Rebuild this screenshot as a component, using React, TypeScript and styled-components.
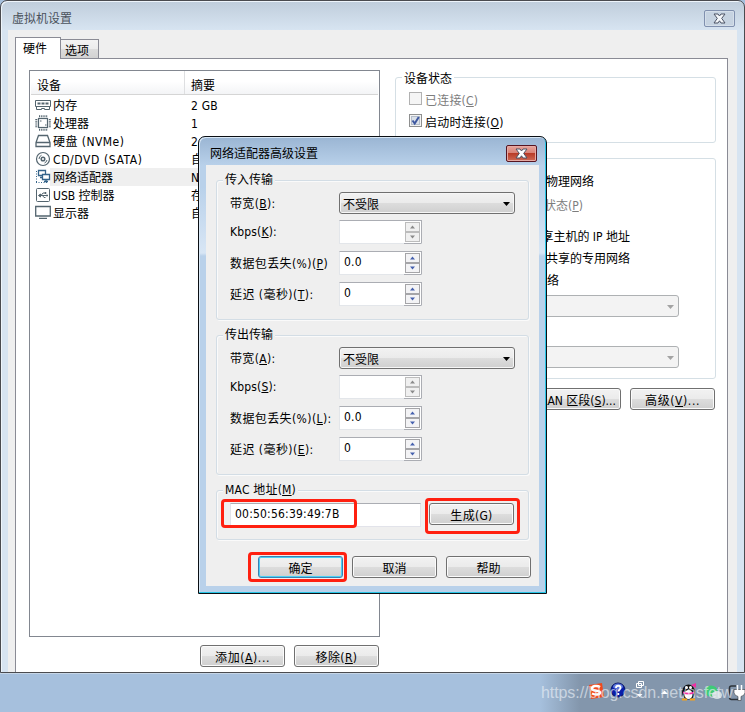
import React from "react";
import styled, { createGlobalStyle, css } from "styled-components";

const Global = createGlobalStyle`
  * { box-sizing: border-box; }
  body { margin: 0; overflow: hidden; background: #a6c0dd; }
`;

const Desktop = styled.div`
  position: relative;
  width: 745px;
  height: 712px;
  overflow: hidden;
  display: flex;
  flex-direction: column;
  background: #a6c0dd;
  color: #000;
  font: 12px/18px "DejaVu Sans Condensed", "Noto Sans CJK SC", sans-serif;
  white-space: nowrap;
`;

const Window = styled.div`
  width: 745px;
  height: 673px;
  display: flex;
  flex-direction: column;
  border: 1px solid #4a4b4f;
  border-radius: 7px 7px 0 0;
  box-shadow: inset 1px 1px 0 #eef5fb;
  background: linear-gradient(#bfcddb 0, #d7e4f1 29px, #d7e4f1 100%);
`;

const TitleBar = styled.div`
  height: 29px;
  flex: none;
  display: flex;
  justify-content: space-between;
  padding: 9px 9px 0 11px;
  color: #4a525c;
`;

const CloseButton = styled.div<{ $red?: boolean }>`
  width: 31px;
  height: 17px;
  display: flex;
  align-items: center;
  justify-content: center;
  border-radius: 2px;
  border: 1px solid ${(p) => (p.$red ? "#571521" : "#8090ae")};
  box-shadow: inset 0 0 0 1px ${(p) => (p.$red ? "#e6aaa4" : "#d5dfea")};
  background: ${(p) =>
    p.$red ? "linear-gradient(#e7a49c 0, #d88175 48%, #b93c28 50%, #ce6a55 100%)" : "#c6d3e1"};
`;

const Client = styled.div`
  flex: 1;
  min-height: 0;
  display: flex;
  flex-direction: column;
  margin: 0 7px;
  padding: 7px 9px 0 7px;
  background: #efefef;
`;

const Tabs = styled.div`
  height: 21px;
  flex: none;
  display: flex;
  align-items: flex-end;
`;

const Tab = styled.div<{ $active?: boolean }>`
  border: 1px solid #8a8b95;
  border-bottom: 0;
  ${(p) =>
    p.$active
      ? css`
          width: 46px;
          height: 22px;
          margin-bottom: -1px;
          padding: 2px 0 0 7px;
          background: #fff;
          z-index: 1;
        `
      : css`
          width: 38px;
          height: 19px;
          padding: 2px 0 0 4px;
          border-left: 0;
          background: linear-gradient(#f3f3f3, #ececec 50%, #dcdcdc 52%, #d2d2d2);
        `}
`;

const Page = styled.div`
  flex: 1;
  min-height: 0;
  display: flex;
  gap: 15px;
  padding: 11px 11px 0 13px;
  border: 1px solid #8a8b95;
  border-bottom: 0;
  background: #fff;
`;

const Left = styled.div`
  width: 351px;
  display: flex;
  flex-direction: column;
`;

const List = styled.div`
  height: 567px;
  flex: none;
  border: 1px solid #828790;
  background: #fff;
`;

const ListHeader = styled.div`
  display: flex;
  height: 24px;
  margin: 0 1px 1px;
  border-bottom: 1px solid #d5d5d5;
  background: linear-gradient(#fff 45%, #f3f4f6);
`;

const HeaderCell = styled.div<{ $w?: number }>`
  width: ${(p) => (p.$w ? p.$w + "px" : "auto")};
  padding: 6px 0 0 6px;
  ${(p) => p.$w && "border-right: 1px solid #dedfe1;"}
`;

const ListRow = styled.div<{ $selected?: boolean }>`
  display: flex;
  height: 18px;
  padding: 1px 0 0 5px;
  background: ${(p) => (p.$selected ? "linear-gradient(90deg, #fff 20px, #efefef 20px)" : "transparent")};
`;

const DeviceIcon = styled.svg`
  width: 17px;
  height: 17px;
  margin-right: 1px;
  flex: none;
  fill: none;
  stroke: #54656f;
`;

const DeviceName = styled.div<{ $ls: number }>`
  width: 138px;
  letter-spacing: ${(p) => p.$ls}px;
`;

const Text = styled.span<{ $ls?: number; $dim?: boolean }>`
  letter-spacing: ${(p) => p.$ls ?? 0}px;
  color: ${(p) => (p.$dim ? "#7d7d7d" : "inherit")};
`;

const Key = styled.span`
  text-decoration: underline;
  text-underline-offset: 1px;
  text-decoration-thickness: 1px;
`;

const Actions = styled.div<{ $top: number; $shift: number }>`
  display: flex;
  justify-content: flex-end;
  gap: 9px;
  margin: ${(p) => p.$top}px ${(p) => p.$shift}px 0 0;
`;

const Button = styled.div<{ $primary?: boolean }>`
  width: 85px;
  height: 22px;
  flex: none;
  display: flex;
  justify-content: center;
  padding-top: 3px;
  border: 1px solid ${(p) => (p.$primary ? "#3c7fb1" : "#707070")};
  border-radius: 3px;
  box-shadow: inset 0 0 0 1px ${(p) => (p.$primary ? "#48d0f6" : "#fbfbfb")};
  background: linear-gradient(#f2f2f2, #ebebeb 48%, #dddddd 50%, #cfcfcf);
`;

const Right = styled.div`
  width: 321px;
  padding-top: 7px;
`;

const Group = styled.div<{ $h: number; $gap?: number; $inDialog?: boolean }>`
  height: ${(p) => p.$h}px;
  margin-bottom: ${(p) => p.$gap ?? 0}px;
  display: flex;
  flex-direction: column;
  align-items: stretch;
  border: 1px solid ${(p) => (p.$inDialog ? "#d3dde5" : "#d5dfe5")};
  border-radius: 3px;
  ${(p) => p.$inDialog && "box-shadow: inset 1px 1px 0 #fafafa, 1px 1px 0 #fafafa;"}
`;

const Legend = styled.div<{ $bg: string; $drop?: number }>`
  align-self: flex-start;
  height: 18px;
  margin: ${(p) => -10 + (p.$drop ?? 0)}px 0 0 6px;
  padding: 0 2px;
  background: ${(p) => p.$bg};
`;

const CheckRow = styled.div`
  display: flex;
  height: 22px;
  gap: 3px;
  padding: 4px 0 0 13px;
`;

const CheckBox = styled.svg`
  width: 13px;
  height: 13px;
  flex: none;
`;

const Option = styled.div<{ $w: number; $h: number }>`
  flex: none;
  height: ${(p) => p.$h}px;
  width: ${(p) => p.$w}px;
  padding-top: 1px;
  text-align: right;
`;

const Combo = styled.div<{ $w: number; $gap?: number; $off?: boolean }>`
  width: ${(p) => p.$w}px;
  height: 22px;
  flex: none;
  display: flex;
  justify-content: space-between;
  margin-bottom: ${(p) => p.$gap ?? 0}px;
  padding: 3px 4px 0 3px;
  border: 1px solid ${(p) => (p.$off ? "#aeb1b3" : "#707070")};
  border-radius: 3px;
  background: ${(p) => (p.$off ? "#f3f3f3" : "linear-gradient(#f2f2f2, #ebebeb 48%, #dddddd 50%, #cfcfcf)")};
  ${(p) => !p.$off && "box-shadow: inset 0 0 0 1px #f6f6f6;"}
`;

const Arrow = styled.svg<{ $c: string }>`
  width: 7px;
  height: 4px;
  margin-top: 6px;
  fill: ${(p) => p.$c};
`;

/* Modal dialog */
const Dialog = styled.div`
  position: absolute;
  left: 198px;
  top: 136px;
  width: 349px;
  height: 458px;
  display: flex;
  flex-direction: column;
  border: 1px solid #0b0f14;
  border-radius: 7px 7px 0 0;
  box-shadow: inset -1px -1px 0 #27c5e6, inset 1px 1px 0 #d9e8f6;
  background: linear-gradient(#9ab5d3 0, #b9d1ea 29px, #b9d1ea 50px, #d8e6f5 116px, #b9d1ea 119px);
`;

const DialogTitle = styled.div`
  height: 28px;
  flex: none;
  display: flex;
  justify-content: space-between;
  padding: 8px 9px 0 11px;
`;

const DialogBody = styled.div`
  width: 333px;
  height: 421px;
  margin-left: 7px;
  padding: 15px 10px 0;
  background: #efefef;
`;

const Field = styled.div<{ $h: number }>`
  display: grid;
  grid-template-columns: 109px auto;
  height: ${(p) => p.$h}px;
  padding: 3px 0 0 13px;
`;

const FieldLabel = styled.div<{ $top: number; $ls: number }>`
  padding-top: ${(p) => p.$top}px;
  letter-spacing: ${(p) => p.$ls}px;
`;

const Spinner = styled.div`
  width: 83px;
  height: 24px;
  display: flex;
  justify-content: space-between;
  padding: 1px 0 1px 4px;
  border: 1px solid #e3e6ea;
  border-top-color: #abadb3;
  border-right-color: #abadb3;
  background: #fff;
`;

const SpinButtons = styled.svg`
  width: 17px;
  height: 23px;
  margin: -1px 0 -2px;
`;

const MacRow = styled.div`
  display: flex;
  justify-content: space-between;
  margin: 4px 14px 0 13px;
`;

const MacInput = styled.div`
  width: 191px;
  height: 24px;
  padding: 1px 4px;
  border: 1px solid #e2e3ea;
  border-top-color: #abadb3;
  background: #fff;
`;

const Highlight = styled.div<{ $x: number; $y: number; $w: number; $h: number }>`
  position: absolute;
  left: ${(p) => p.$x}px;
  top: ${(p) => p.$y}px;
  width: ${(p) => p.$w}px;
  height: ${(p) => p.$h}px;
  border: 3px solid #ff2010;
  border-radius: 4px;
`;

const Taskbar = styled.div`
  height: 39px;
  display: flex;
  justify-content: flex-end;
  border-top: 1px solid #c6d6e7;
  background: linear-gradient(90deg, #a6c0dd 540px, #8396ac 580px);
`;

const Tray = styled.svg`
  width: 165px;
  height: 38px;
`;

const Watermark = styled.div`
  position: absolute;
  left: 541px;
  top: 683px;
  font: 16px/20px "Liberation Sans", sans-serif;
  letter-spacing: -0.08px;
  color: rgba(235, 240, 246, 0.65);
`;

const Cross = ({ dim }: { dim?: boolean }) => (
  <svg width="13" height="11" viewBox="0 0 13 11">
    <path d="M1 1h4l1.500 2L8 1h4L8.700 5.400 12 10H8L6.500 7.800 5 10H1l3.300-4.600z" fill={dim ? "#f4f7fa" : "#fff"} stroke="#4b5264" strokeWidth="1" />
  </svg>
);

const icons: Record<string, React.ReactNode> = {
  memory: (
    <>
      <path d="M.5 3.500h15v6H.5zM1.500 10v2.500h5v-1h3v1h5V10" />
      <path strokeWidth="2" d="M2.500 6.500h3M6.500 6.500h3M10.500 6.500h3" />
    </>
  ),
  cpu: (
    <>
      <rect x="3.500" y="3.500" width="9" height="9" strokeWidth="1.200" />
      <path strokeWidth="2" strokeDasharray="1.200 1" d="M4 1.300h9M4 14.800h9M1.300 4v9M14.800 4v9" />
      <path d="M5 6h1.500M10 10h1.500" />
    </>
  ),
  disk: (
    <path strokeWidth="1.300" d="M3.500 2.500h9l2.500 7v4H1v-4zM1 9.500h14" />
  ),
  cd: (
    <>
      <circle cx="8" cy="8" r="6.500" strokeWidth="1.200" />
      <circle cx="8" cy="8" r="1.800" strokeWidth="1.500" />
      <path d="M4 8A4 4 0 0 1 6.500 4.300M9.500 12a4 4 0 0 0 2.500-3" />
    </>
  ),
  net: (
    <g stroke="#35648a">
      <path strokeDasharray="1 1.500" d="M1.500 2v12M1 13.500h12" />
      <path strokeWidth="1.300" fill="#fff" d="M3.500 1.500h7v5h-7zM5 8.500h3" />
      <path strokeWidth="1.300" fill="#fff" d="M7.500 5.500h7v5h-7zM11 10.500v2M9 12.500h4" />
    </g>
  ),
  usb: (
    <>
      <rect x="1.500" y="1.500" width="13" height="13" rx="1" />
      <path d="M4 8.500h8M6 8.500 8 6h2M7.500 8.500l1.500 2h1.500" />
      <path fill="#54656f" d="M3.500 8.500l2-1.500v3zM10 5.500h1v1h-1zM11.500 8h1v1h-1z" />
    </>
  ),
  display: (
    <path strokeWidth="1.300" d="M.7 1.500h14.600v9.500H.7zM4 13.300h8" />
  ),
};

const devices: [string, string, string, number][] = [
  ["memory", "内存", "2 GB", 0.2],
  ["cpu", "处理器", "1", 0],
  ["disk", "硬盘 (NVMe)", "2", 0.45],
  ["cd", "CD/DVD (SATA)", "自", 0.6],
  ["net", "网络适配器", "N", 0],
  ["usb", "USB 控制器", "存", 0],
  ["display", "显示器", "自", 0],
];

const DownArrow = ({ color }: { color: string }) => (
  <Arrow $c={color} viewBox="0 0 7 4">
    <path d="M0 0h7L3.500 4z" />
  </Arrow>
);

const Spin = ({ value, off }: { value?: string; off?: boolean }) => (
  <Spinner>
    <Text $ls={0.2}>{value}</Text>
    <SpinButtons viewBox="0 0 17 23">
      <path d="M0 22.500h17" stroke="#abadb3" />
      <g fill={off ? "#f0f0f0" : "#f3f3f5"} stroke={off ? "#bcbcbc" : "#a5a5a8"}>
        <rect x="1.500" y="1.500" width="14" height="9" />
        <rect x="1.500" y="11.500" width="14" height="9" />
      </g>
      <path d="M6 7.500h5L8.500 4.500zM6 14.500h5L8.500 17.500z" fill={off ? "#8a8a8a" : "#4560ae"} />
    </SpinButtons>
  </Spinner>
);

const Transfer = ({ title, keys, gap, colon }: { title: string; keys: string[]; gap: number; colon?: boolean }) => (
  <Group $h={140} $gap={gap} $inDialog>
    <Legend $bg="#efefef">{title}</Legend>
    <Field $h={28}>
      <FieldLabel $top={3} $ls={0.35}>带宽(<Key>{keys[0]}</Key>):</FieldLabel>
      <Combo $w={176}>
        <Text>不受限</Text>
        <DownArrow color="#000" />
      </Combo>
    </Field>
    <Field $h={31}>
      <FieldLabel $top={3} $ls={0.15}>Kbps(<Key>{keys[1]}</Key>):</FieldLabel>
      <Spin off />
    </Field>
    <Field $h={31}>
      <FieldLabel $top={4} $ls={0.4}>数据包丢失(%)(<Key>{keys[2]}</Key>){colon && ":"}</FieldLabel>
      <Spin value="0.0" />
    </Field>
    <Field $h={31}>
      <FieldLabel $top={4} $ls={0.45}>延迟 (毫秒)(<Key>{keys[3]}</Key>):</FieldLabel>
      <Spin value="0" />
    </Field>
  </Group>
);

const TrayIcons = () => (
  <Tray viewBox="0 0 165 38">
    <path d="M9 11l13-2 2 14-13 2z" fill="#ef4a1c" />
    <path d="M20 13c-3-2-8-1-8 1.500 0 3 8 1.500 8 4 0 2.500-5 2.500-8 1" fill="none" stroke="#fff" strokeWidth="2.500" />
    <circle cx="38" cy="16" r="7" fill="#0a1ea8" stroke="#061260" />
    <ellipse cx="38" cy="12.500" rx="5" ry="3" fill="#5c78dc" />
    <path d="M36 14c0-3 4.500-3 4.500 0 0 1.500-2 1.500-2 3.500M38.300 19v2" fill="none" stroke="#fff" strokeWidth="1.800" />
    <path d="M58.500 7.500h5v4h-5zM56.500 9.500h5v4h-5z" fill="#8396ac" stroke="#fff" />
    <path d="M56.500 20h6l-3 3z" fill="#fff" />
    <path d="M81 20l3.500-3.500L88 20z" fill="#fff" />
    <ellipse cx="108.500" cy="18" rx="6.500" ry="7.500" fill="#111" />
    <ellipse cx="108.500" cy="20.500" rx="4" ry="4.500" fill="#fff" />
    <circle cx="106.500" cy="13.500" r="1.500" fill="#fff" />
    <circle cx="110.500" cy="13.500" r="1.500" fill="#fff" />
    <path d="M103 17.500q5.500 2.500 11 0v2q-5.500 2-11 0z" fill="#f02fa2" />
    <path d="M111 11l5-2v5z" fill="#f02fa2" />
    <path d="M102 25.500h5M110 25.500h5" stroke="#f6a21b" strokeWidth="2" />
    <ellipse cx="131" cy="17" rx="6.500" ry="5.500" fill="#3ecb78" />
    <ellipse cx="137" cy="21" rx="5" ry="4" fill="#d3dde0" />
    <path d="M156 12h-4.500q-2 0-2 2v9.500q0 2 2 2h7" fill="none" stroke="#2c3339" strokeWidth="1.500" />
    <path d="M154 15.500h11v3q0 3-4 4v4h-3v-4q-4-1-4-4z" fill="#fff" stroke="#30363c" strokeWidth=".6" />
    <path d="M157.500 11v5M161.500 11v5" stroke="#fff" strokeWidth="1.500" />
  </Tray>
);

export default function App() {
  return (
    <Desktop>
      <Global />
      <Window>
        <TitleBar>
          <Text>虚拟机设置</Text>
          <CloseButton><Cross dim /></CloseButton>
        </TitleBar>
        <Client>
          <Tabs>
            <Tab $active>硬件</Tab>
            <Tab>选项</Tab>
          </Tabs>
          <Page>
            <Left>
              <List>
                <ListHeader>
                  <HeaderCell $w={154}>设备</HeaderCell>
                  <HeaderCell>摘要</HeaderCell>
                </ListHeader>
                {devices.map(([icon, name, summary, spacing]) => (
                  <ListRow key={icon} $selected={icon === "net"}>
                    <DeviceIcon viewBox="0 0 17 17">{icons[icon]}</DeviceIcon>
                    <DeviceName $ls={spacing}>{name}</DeviceName>
                    <Text $ls={0.2}>{summary}</Text>
                  </ListRow>
                ))}
              </List>
              <Actions $top={8} $shift={1}>
                <Button><Text $ls={0.6}>添加(<Key>A</Key>)...</Text></Button>
                <Button><Text $ls={0.4}>移除(<Key>R</Key>)</Text></Button>
              </Actions>
            </Left>
            <Right>
              <Group $h={66} $gap={15}>
                <Legend $bg="#fff" $drop={2}>设备状态</Legend>
                <CheckRow>
                  <CheckBox viewBox="0 0 13 13"><rect x=".5" y=".5" width="12" height="12" fill="#f5f5f5" stroke="#b1b1b1" /></CheckBox>
                  <Text $dim $ls={0.2}>已连接(<Key>C</Key>)</Text>
                </CheckRow>
                <CheckRow>
                  <CheckBox viewBox="0 0 13 13">
                    <rect x=".5" y=".5" width="12" height="12" fill="#f4f4f4" stroke="#8e8f8f" />
                    <rect x="2.500" y="2.500" width="8" height="8" fill="#dbe1e9" stroke="#b4bdca" />
                    <path d="M3.500 6.500l2.200 3L9.800 3" fill="none" stroke="#3e58a0" strokeWidth="2" />
                  </CheckBox>
                  <Text $ls={0.2}>启动时连接(<Key>O</Key>)</Text>
                </CheckRow>
              </Group>
              <Group $h={221} $gap={9}>
                <Option $w={198} $h={13} />
                <Option $w={198} $h={24}>物理网络</Option>
                <Option $w={187} $h={31}><Text $dim>状态(<Key>P</Key>)</Text></Option>
                <Option $w={234} $h={22}>享主机的 IP 地址</Option>
                <Option $w={234} $h={22}>共享的专用网络</Option>
                <Option $w={163} $h={24}>络</Option>
                <Combo $w={283} $gap={29} $off><span /><DownArrow color="#a3a3a3" /></Combo>
                <Combo $w={283} $off><span /><DownArrow color="#a3a3a3" /></Combo>
              </Group>
              <Actions $top={0} $shift={1}>
                <Button><Text>LAN 区段(<Key>S</Key>)...</Text></Button>
                <Button><Text $ls={0.6}>高级(<Key>V</Key>)...</Text></Button>
              </Actions>
            </Right>
          </Page>
        </Client>
      </Window>

      <Taskbar><TrayIcons /></Taskbar>
      <Watermark>https://blog.csdn.net/nsfetw</Watermark>

      <Dialog>
        <DialogTitle>
          <Text>网络适配器高级设置</Text>
          <CloseButton $red><Cross /></CloseButton>
        </DialogTitle>
        <DialogBody>
          <Transfer title="传入传输" keys={["B", "K", "P", "T"]} gap={15} />
          <Transfer title="传出传输" keys={["A", "S", "L", "E"]} gap={15} colon />
          <Group $h={50} $inDialog>
            <Legend $bg="#efefef"><Text $ls={0.2}>MAC 地址(<Key>M</Key>)</Text></Legend>
            <MacRow>
              <MacInput><Text $ls={0.2}>00:50:56:39:49:7B</Text></MacInput>
              <Button><Text $ls={0.3}>生成(G)</Text></Button>
            </MacRow>
          </Group>
          <Actions $top={16} $shift={-2}>
            <Button $primary>确定</Button>
            <Button>取消</Button>
            <Button>帮助</Button>
          </Actions>
        </DialogBody>
        <Highlight $x={22} $y={362} $w={136} $h={29} />
        <Highlight $x={226} $y={361} $w={95} $h={36} />
        <Highlight $x={49} $y={415} $w={99} $h={30} />
      </Dialog>
    </Desktop>
  );
}
